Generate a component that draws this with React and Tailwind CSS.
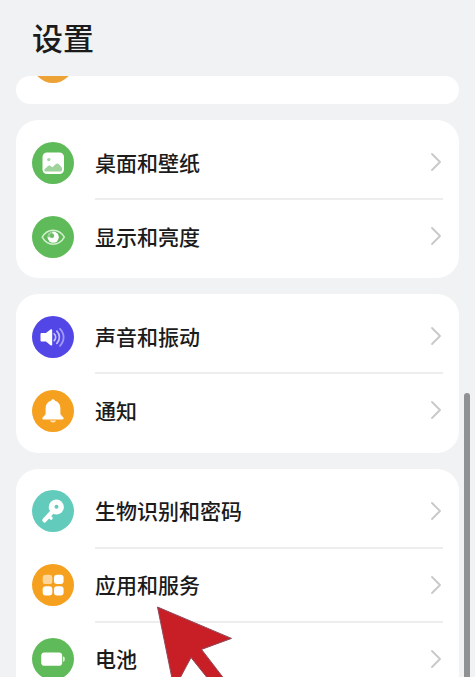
import React from 'react';

const WallpaperIcon = () => (
  <svg viewBox="0 0 42 42" className="h-[42px] w-[42px]">
    <rect x="10.5" y="10.5" width="21.5" height="21.5" rx="4.5" fill="#fff" />
    <circle cx="16.8" cy="17.6" r="1.7" fill="#a5d8a3" />
    <path d="M12.5 29.5v-2.3l3.6-3.2c.8-.6 1.7-.6 2.4 0l2 1.200 3.400-3.200c.8-.8 2-.8 2.800 0l3.300 3.800v2.200c0 .9-.6 1.500-1.500 1.500z" fill="#9fd39c" />
  </svg>
);

const EyeIcon = () => (
  <svg viewBox="0 0 42 42" className="h-[42px] w-[42px]" fill="none">
    <path
      d="M10.2 21.2C12.6 17 16.5 14.2 21 14.2s8.900 2.800 11.300 7c-2.400 4.200-6.800 7-11.300 7s-8.400-2.800-10.800-7z"
      stroke="#d3efcf"
      strokeWidth="1.5"
      strokeLinejoin="round"
    />
    <circle cx="21.2" cy="21.2" r="5.600" fill="#fff" />
    <path d="M21.2 21.2h-5.600a5.600 5.600 0 0 1 4.600-5.500z" fill="#94d08f" />
    <circle cx="20" cy="19.8" r="2.200" fill="#6cbd66" />
  </svg>
);

const SoundIcon = () => (
  <svg viewBox="0 0 42 42" className="h-[42px] w-[42px]" fill="none">
    <path
      d="M9.700 17h4.200l4.600-3.600c.8-.6 1.700-.1 1.700.8v14.200c0 .9-.9 1.400-1.700.8L13.900 25.600H9.700c-.7 0-1.200-.5-1.200-1.200v-6.200c0-.7.500-1.200 1.200-1.200z"
      fill="#fff"
    />
    <path d="M22.300 18c1.700 1.800 1.700 4.800 0 6.600" stroke="#c9c5ff" strokeWidth="1.800" strokeLinecap="round" />
    <path d="M24.900 15.200c3.300 3.400 3.300 8.800 0 12.200" stroke="#c0bbfd" strokeWidth="1.800" strokeLinecap="round" />
    <path d="M28 12.800c4.800 4.800 4.800 12.200 0 17" stroke="#a19bf7" strokeWidth="1.800" strokeLinecap="round" />
  </svg>
);

const BellIcon = () => (
  <svg viewBox="0 0 42 42" className="h-[42px] w-[42px]" fill="#fff">
    <path d="M21 9.300c1 0 1.700.6 2 1.500 3.400 1 5.400 3.800 5.400 7.400v6l2.900 3.200c.8.900.3 2-.8 2H11.500c-1.100 0-1.600-1.100-.8-2l2.900-3.200v-6c0-3.600 2-6.400 5.400-7.400.3-.9 1-1.500 2-1.500z" />
    <path d="M17.800 30.500h6.400c-.5 1.300-1.700 2-3.200 2s-2.700-.7-3.200-2z" fill="#ffe3b5" />
  </svg>
);

const KeyIcon = () => (
  <svg viewBox="0 0 42 42" className="h-[42px] w-[42px]" fill="none">
    <path d="M20.500 21.500 12.500 30.300" stroke="#fff" strokeWidth="4.400" strokeLinecap="round" />
    <path d="m17.200 26.300 1.900 1.900" stroke="#fff" strokeWidth="3.200" strokeLinecap="round" />
    <circle cx="24.300" cy="17" r="7.600" fill="#fff" />
    <circle cx="24.500" cy="16.700" r="2" fill="#62cbbb" />
  </svg>
);

const AppsIcon = () => (
  <svg viewBox="0 0 42 42" className="h-[42px] w-[42px]" fill="#fff">
    <rect x="10.700" y="10.700" width="9.600" height="9.400" rx="3.200" fill="#ffd69a" />
    <rect x="22" y="10.700" width="9.600" height="9.400" rx="3" />
    <rect x="10.700" y="22.200" width="9.600" height="9.400" rx="3" />
    <rect x="22" y="22.200" width="9.600" height="9.400" rx="3" />
  </svg>
);

const BatteryIcon = () => (
  <svg viewBox="0 0 42 42" className="h-[42px] w-[42px]" fill="#fff">
    <rect x="9.200" y="14.400" width="21" height="13.400" rx="3.400" />
    <path d="M31.200 18.400c.9.200 1.400.8 1.400 1.700v2c0 .9-.5 1.500-1.400 1.700z" />
  </svg>
);

const groups = [
  [
    { label: '桌面和壁纸', color: 'bg-[#5fba59]', Icon: WallpaperIcon },
    { label: '显示和亮度', color: 'bg-[#5fba59]', Icon: EyeIcon },
  ],
  [
    { label: '声音和振动', color: 'bg-[#5246e6]', Icon: SoundIcon },
    { label: '通知', color: 'bg-[#f6a01f]', Icon: BellIcon },
  ],
  [
    { label: '生物识别和密码', color: 'bg-[#62cbbb]', Icon: KeyIcon },
    { label: '应用和服务', color: 'bg-[#f6a01f]', Icon: AppsIcon },
    { label: '电池', color: 'bg-[#5fba59]', Icon: BatteryIcon },
  ],
];

const Row = ({ label, color, Icon, divider }) => (
  <div className="flex h-[74px] items-center gap-[21px] pr-4 pl-4">
    <div className={`mb-px h-[42px] w-[42px] shrink-0 overflow-hidden rounded-full ${color}`}>
      <Icon />
    </div>
    <div className={`flex h-full flex-1 items-center justify-between border-b-2 ${divider ? 'border-[#ededee]' : 'border-transparent'}`}>
      <span className="pt-[2px] text-[21px] leading-none font-medium text-[#1b1b1c]">{label}</span>
      <svg viewBox="0 0 12 20" className="mr-px h-5 w-3" fill="none">
        <path d="m2 2 8 8-8 8" stroke="#c8c8c9" strokeWidth="1.800" strokeLinecap="round" strokeLinejoin="round" />
      </svg>
    </div>
  </div>
);

const App = () => {
  return (
    <div className="relative h-[677px] w-[475px] overflow-hidden bg-[#f0f2f3] font-['Noto_Sans','Noto_Sans_CJK_SC',sans-serif]">
      <header className="flex h-[76px] items-center pl-[32px]">
        <h1 className="text-[31px] leading-none font-medium text-[#1b1b1c]">设置</h1>
      </header>

      <main className="flex flex-col gap-4 pr-4 pl-4">
        {/* Card scrolled under the header */}
        <div className="h-7 overflow-hidden rounded-full bg-white pl-4">
          <div className="-mt-[35px] h-[42px] w-[42px] rounded-full bg-[#eda236]"></div>
        </div>

        {groups.map((rows, i) => (
          <section key={i} className="rounded-[22px] bg-white pt-[6px] pb-[4.400px]">
            {rows.map((row, j) => (
              <Row key={row.label} {...row} divider={i === 2 || j < rows.length - 1} />
            ))}
          </section>
        ))}
      </main>

      {/* Scrollbar */}
      <div className="absolute top-[393px] right-[5px] bottom-0 w-[6px] rounded-t-full bg-[#909193]"></div>

      {/* Pointer arrow */}
      <svg viewBox="0 0 80 72" className="absolute top-[605px] left-[155px] h-[72px] w-[80px]">
        <path
          d="M2.500 2 76.500 33.400 46.500 44.400 70 75H54L36 52.500 24 75H17.300z"
          fill="#c81f27"
          stroke="#8f4a5c"
          strokeWidth="1"
        />
      </svg>
    </div>
  );
};

export default App;
